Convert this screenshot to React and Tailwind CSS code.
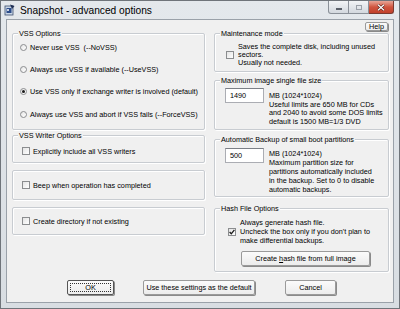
import React from "react";

const Radio = ({ checked }) => (
  <span className="w-[7px] h-[7px] rounded-full border border-[#8b8d8f] bg-gradient-to-br from-[#e6e6e6] to-[#ffffff] flex items-center justify-center shrink-0">
    {checked && <span className="w-[3px] h-[3px] rounded-full bg-[#1a1a1a]" />}
  </span>
);

const Check = ({ checked }) => (
  <span className="w-[8px] h-[8px] border border-[#8b8d8f] bg-gradient-to-br from-[#e4e4e4] to-[#ffffff] flex items-center justify-center shrink-0">
    {checked && (
      <svg width="6" height="6" viewBox="0 0 6 6">
        <path d="M0.6 3 L2.3 4.8 L5.4 0.8" stroke="#1b1b1b" strokeWidth="1.3" fill="none" />
      </svg>
    )}
  </span>
);

const Group = ({ legend, className = "", children }) => (
  <div className={`relative border border-[#c8ccd1] rounded-[2px] shadow-[inset_1px_1px_0_#ffffff,1px_1px_0_#ffffff] ${className}`}>
    {legend && (
      <span className="absolute -top-[5px] left-[5px] px-[1px] bg-[#f0f0f0] leading-[9px] whitespace-nowrap">
        {legend}
      </span>
    )}
    {children}
  </div>
);

const Button = ({ children, className = "", isDefault }) => (
  <div
    className={`flex items-center justify-center rounded-[2px] border ${
      isDefault ? "border-[#555]" : "border-[#9a9a9a]"
    } bg-gradient-to-b from-[#fbfbfb] to-[#ececec] shadow-[1px_1px_0_#8a8a8a] whitespace-nowrap ${className}`}
  >
    {children}
  </div>
);

const RadioRow = ({ checked, children }) => (
  <div className="h-[22.4px] flex items-center gap-[3px] whitespace-nowrap">
    <Radio checked={checked} />
    <span>{children}</span>
  </div>
);

const TextBox = ({ value }) => (
  <div className="w-[39px] h-[15px] border border-[#abadb3] border-t-[#7b7f86] bg-white flex items-center pl-[4px] shrink-0">
    {value}
  </div>
);

export default function App() {
  return (
    <div className="w-[400px] h-[309px] relative overflow-hidden bg-gradient-to-b from-[#e4e8ec] to-[#d8dde2] border border-[#6f747a] font-['Liberation_Sans',Arial,sans-serif] text-[7.25px] leading-[9px] text-black">
      {/* title bar */}
      <div className="h-[18px] flex items-center pl-[3px]">
        <svg width="11" height="12" viewBox="0 0 11 12" className="shrink-0">
          <rect x="1" y="2" width="8" height="9" fill="#c9d6e6" stroke="#3c4f6e" strokeWidth="0.8" />
          <rect x="2.5" y="4" width="5" height="5" fill="#2c4c8a" />
          <path d="M6 0.5 L10.5 2 L8 5 Z" fill="#1f2f55" />
          <circle cx="4" cy="6" r="1" fill="#ffffff" />
        </svg>
        <span className="ml-[5px] text-[10.2px] text-black">Snapshot - advanced options</span>
      </div>

      {/* caption buttons */}
      <div className="absolute top-0 right-[5px] flex h-[13px]">
        <div className="w-[21px] h-full border border-[#8a9098] border-t-0 rounded-bl-[3px] bg-gradient-to-b from-[#f2f4f6] to-[#d3d8de] flex items-center justify-center">
          <span className="w-[6px] h-[2px] bg-[#5a6069] mt-[4px]" />
        </div>
        <div className="w-[20px] h-full border-b border-r border-[#8a9098] bg-gradient-to-b from-[#f2f4f6] to-[#d3d8de] flex items-center justify-center">
          <span className="w-[6px] h-[5px] border border-[#9aa0a8]" />
        </div>
        <div className="w-[25px] h-full border-b border-r border-[#7a3a30] rounded-br-[3px] bg-gradient-to-b from-[#e7a597] via-[#d0553f] to-[#c1402b] flex items-center justify-center">
          <svg width="8" height="7" viewBox="0 0 8 7">
            <path d="M1 0.8 L7 6.2 M7 0.8 L1 6.2" stroke="#4a1b14" strokeWidth="2.4" />
            <path d="M1 0.8 L7 6.2 M7 0.8 L1 6.2" stroke="#ffffff" strokeWidth="1.3" />
          </svg>
        </div>
      </div>

      {/* client area */}
      <div className="ml-[5px] w-[388px] h-[284px] border border-[#9aa1a9] bg-[#f0f0f0] flex flex-col">
        <div className="h-[252px] flex items-start">
          {/* left column */}
          <div className="ml-[5px] w-[193px] pt-[13px] flex flex-col">
            <Group legend="VSS Options" className="h-[97px] pt-[2px] pl-[7px]">
              <RadioRow>Never use VSS&nbsp; (--NoVSS)</RadioRow>
              <RadioRow>Always use VSS if available (--UseVSS)</RadioRow>
              <RadioRow checked>Use VSS only if exchange writer is involved (default)</RadioRow>
              <RadioRow>Always use VSS and abort if VSS fails (--ForceVSS)</RadioRow>
            </Group>
            <Group legend="VSS Writer Options" className="mt-[5px] h-[28px] pl-[9px]">
              <div className="mt-[10px] h-[10px] flex items-center gap-[3px] whitespace-nowrap">
                <Check />
                <span>Explicitly include all VSS writers</span>
              </div>
            </Group>
            <Group className="mt-[7px] h-[30px] pl-[9px]">
              <div className="mt-[9px] h-[10px] flex items-center gap-[3px] whitespace-nowrap">
                <Check />
                <span>Beep when operation has completed</span>
              </div>
            </Group>
            <Group className="mt-[7px] h-[28px] pl-[9px]">
              <div className="mt-[8px] h-[10px] flex items-center gap-[3px] whitespace-nowrap">
                <Check />
                <span>Create directory if not existing</span>
              </div>
            </Group>
          </div>

          {/* right column */}
          <div className="ml-[9px] w-[175px] pt-[2px] flex flex-col">
            <Button className="self-end mr-[1px] w-[23px] h-[9px] rounded-[1px]">Help</Button>
            <Group legend="Maintenance mode" className="mt-[2px] h-[39px] pl-[11px] pt-[9px]">
              <div className="flex items-center gap-[4px]">
                <Check />
                <div className="leading-[8px] whitespace-nowrap">
                  <div>Saves the complete disk, including unused</div>
                  <div>sectors.</div>
                  <div>Usually not needed.</div>
                </div>
              </div>
            </Group>
            <Group legend="Maximum image single file size" className="mt-[8px] h-[50px] pl-[10px] pt-[7px]">
              <div className="flex items-start gap-[5px]">
                <TextBox value="1490" />
                <div className="mt-[4px] leading-[8.7px] whitespace-nowrap">
                  <div>MB (1024*1024)</div>
                  <div>Useful limits are 650 MB for CDs</div>
                  <div>and 2040 to avoid some DOS limits</div>
                  <div>default is 1500 MB=1/3 DVD</div>
                </div>
              </div>
            </Group>
            <Group legend="Automatic Backup of small boot partitions" className="mt-[9px] h-[58px] pl-[10px] pt-[8px]">
              <div className="flex items-start gap-[5px]">
                <TextBox value="500" />
                <div className="mt-[1px] leading-[9.1px] whitespace-nowrap">
                  <div>MB (1024*1024)</div>
                  <div>Maximum partition size for</div>
                  <div>partitions automatically included</div>
                  <div>in the backup. Set to 0 to disable</div>
                  <div>automatic backups.</div>
                </div>
              </div>
            </Group>
            <Group legend="Hash File Options" className="mt-[11px] h-[64px] pl-[13px] pt-[9px]">
              <div className="flex items-center gap-[4px]">
                <Check checked />
                <div className="whitespace-nowrap">
                  <div>Always generate hash file.</div>
                  <div>Uncheck the box only if you don't plan to</div>
                  <div>make differential backups.</div>
                </div>
              </div>
              <Button className="mt-[6px] ml-[13px] w-[129px] h-[15px]">
                <span>
                  Create <span className="underline">h</span>ash file from full image
                </span>
              </Button>
            </Group>
          </div>
        </div>

        {/* bottom buttons */}
        <div className="mt-[8px] h-[15px] flex">
          <Button isDefault className="ml-[60px] w-[47px] h-full p-[2px]">
            <span className="w-full h-full border border-dotted border-[#333] flex items-center justify-center">OK</span>
          </Button>
          <Button className="ml-[29px] w-[112px] h-full">Use these settings as the default</Button>
          <Button className="ml-[30px] w-[51px] h-full">Cancel</Button>
        </div>
      </div>
    </div>
  );
}
